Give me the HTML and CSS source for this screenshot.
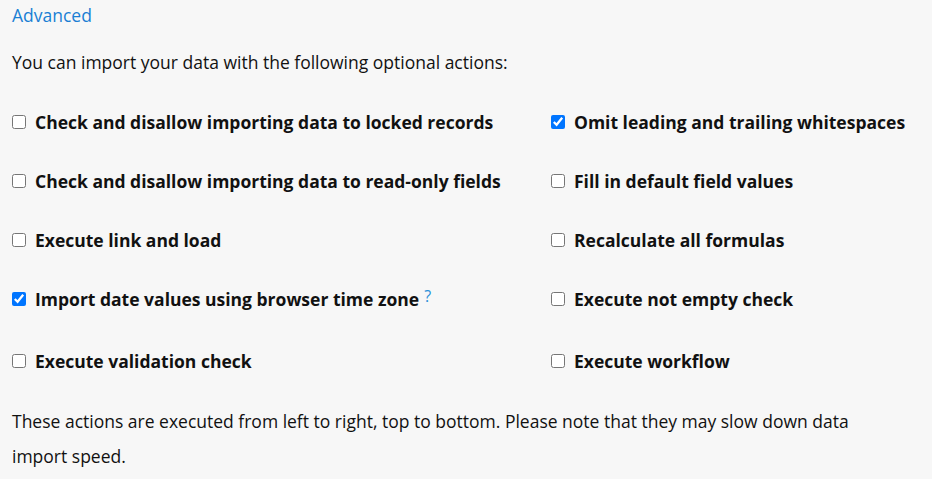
FILE: index.html
```html
<!DOCTYPE html>
<html lang="en">
<head>
    <meta charset="UTF-8">
    <meta name="viewport" content="width=device-width, initial-scale=1.0">
    <title>Import Options</title>
    <link rel="stylesheet" href="styles.css">
</head>
<body>

    <div class="container">
        <a href="#" class="advanced">Advanced</a>

        <p class="intro">You can import your data with the following optional actions:</p>

        <div class="options">
            <label class="option"><input type="checkbox"> Check and disallow importing data to locked records</label>
            <label class="option"><input type="checkbox" checked> Omit leading and trailing whitespaces</label>

            <label class="option"><input type="checkbox"> Check and disallow importing data to read-only fields</label>
            <label class="option"><input type="checkbox"> Fill in default field values</label>

            <label class="option"><input type="checkbox"> Execute link and load</label>
            <label class="option"><input type="checkbox"> Recalculate all formulas</label>

            <label class="option"><input type="checkbox" checked> Import date values using browser time zone <span class="help">?</span></label>
            <label class="option"><input type="checkbox"> Execute not empty check</label>

            <label class="option last"><input type="checkbox"> Execute validation check</label>
            <label class="option last"><input type="checkbox"> Execute workflow</label>
        </div>

        <p class="note">These actions are executed from left to right, top to bottom. Please note that they may slow down data import speed.</p>
    </div>

</body>
</html>
```

FILE: styles.css
```css
body { margin: 0; background: #f7f7f7; color: #111; font-family: "Open Sans", sans-serif; font-size: 17.5px; }
.container { padding: 2px 12px 0; width: 850px; }
.advanced { color: #1a7fd4; text-decoration: none; display: block; line-height: 26px; }
.intro { margin: 21px 0 0; line-height: 26px; }
.options { display: grid; grid-template-columns: 539px 1fr; row-gap: 33px; margin-top: 34px; }
.option { font-weight: bold; display: flex; align-items: center; line-height: 26px; white-space: nowrap; }
.option.last { margin-top: 3px; }
.option input { margin: 0 9px 0 0; width: 14px; height: 14px; flex: none; }
.help { color: #2a8fd8; font-weight: normal; font-size: 16px; margin-left: 5px; position: relative; top: -3px; }
.note { margin: 30px 0 0; line-height: 35px; }
```
